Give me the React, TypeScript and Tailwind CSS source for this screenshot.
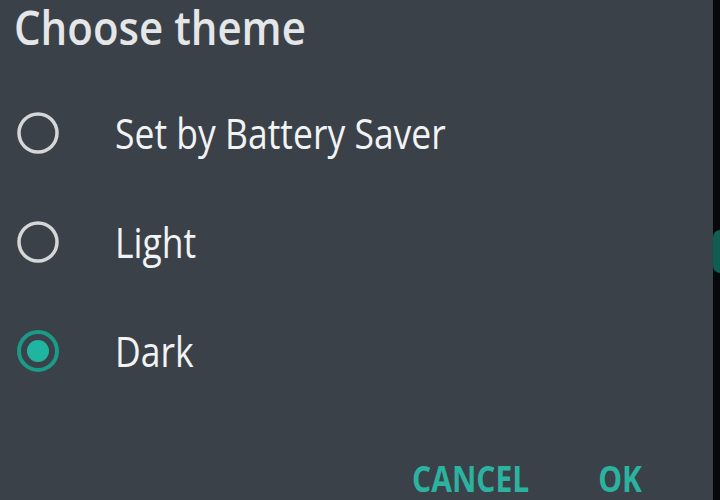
import React from "react";

function Radio({ checked }: { checked?: boolean }) {
  return (
    <svg width="46" height="46" viewBox="0 0 46 46" className="shrink-0">
      {checked ? (
        <>
          <circle cx="23" cy="23" r="19" fill="none" stroke="#1a9a88" strokeWidth="4" />
          <circle cx="23" cy="23" r="11" fill="#1fb5a1" />
        </>
      ) : (
        <circle cx="23" cy="23" r="19" fill="none" stroke="#d4d6d8" strokeWidth="3.5" />
      )}
    </svg>
  );
}

function Option({ label, checked }: { label: string; checked?: boolean }) {
  return (
    <div className="flex items-center h-[109px]">
      <div className="w-[115px] pl-[15px] flex items-center">
        <Radio checked={checked} />
      </div>
      <span
        className="text-[#f2f3f4] text-[35.5px] leading-[1.3] scale-y-[1.2] origin-center inline-block"
        style={{ fontFamily: '"Open Sans", sans-serif' }}
      >
        {label}
      </span>
    </div>
  );
}

export default function App() {
  return (
    <div className="w-[720px] h-[500px] flex overflow-hidden bg-[#05090c]">
      <div className="w-[713px] h-full bg-[#3b4148] flex flex-col">
        <div className="pl-[14px] h-[78px] flex items-start pt-[3px]">
          <span
            className="text-[#e4e6e8] text-[42px] font-semibold leading-[1.15] scale-y-[1.1] inline-block"
            style={{ fontFamily: '"Open Sans", sans-serif' }}
          >
            Choose theme
          </span>
        </div>
        <Option label="Set by Battery Saver" />
        <Option label="Light" />
        <Option label="Dark" checked />
        <div
          className="flex-1 flex items-end justify-end gap-[69px] pr-[71px] pb-[4px] text-[#2bb3a0] text-[30px] font-bold leading-[1.15]"
          style={{ fontFamily: '"Open Sans", sans-serif' }}
        >
          <span className="inline-block scale-y-[1.17]">CANCEL</span>
          <span className="inline-block scale-y-[1.17]">OK</span>
        </div>
      </div>
      <div className="flex-1 flex flex-col">
        <div className="h-[230px]" />
        <div className="h-[43px] bg-[#0f5e52] rounded-l-full" />
      </div>
    </div>
  );
}
